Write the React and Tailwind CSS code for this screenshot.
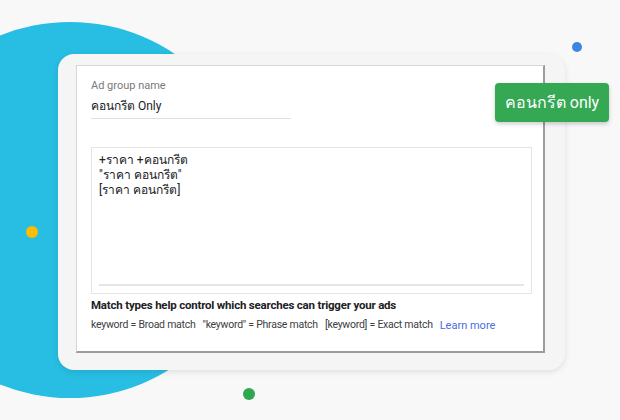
import React from 'react'

const App = () => {
    return (
        <div className="relative w-[620px] h-[420px] overflow-hidden bg-[#f8f8f8]" style={{ fontFamily: 'Roboto, "Noto Sans", sans-serif' }}>
            {/* Decorations */}
            <div className="absolute left-[-118px] top-[22px] w-[376px] h-[376px] rounded-full bg-[#28bde2]"></div>
            <div className="absolute left-[572px] top-[42px] w-[10px] h-[10px] rounded-full bg-[#3d86e0]"></div>
            <div className="absolute left-[26px] top-[226px] w-[12px] h-[12px] rounded-full bg-[#fbbc05]"></div>
            <div className="absolute left-[243px] top-[388px] w-[12px] h-[12px] rounded-full bg-[#2ea84f]"></div>

            {/* Card */}
            <div className="relative ml-[58px] pt-[54px] w-[507px]">
                <div className="bg-[#f5f5f5] rounded-2xl shadow-[0_2px_6px_rgba(0,0,0,0.1)] pt-[11px] pl-[18px] pr-[20px] pb-[17px]">
                    <div className="bg-white h-[288px] border border-[#d6d6d6] border-r-2 border-b-2 border-r-[#9c9c9c] border-b-[#9c9c9c] pl-[14px] pr-[13px] pt-[12px]">
                        {/* Ad group name */}
                        <div className="w-[200px]">
                            <div className="text-[11px] leading-[16px] text-[#7a7a7a]">Ad group name</div>
                            <div className="mt-[4px] text-[12px] leading-[16px] text-[#202124]">คอนกรีต Only</div>
                            <div className="mt-[4px] h-px bg-[#e0e0e0]"></div>
                        </div>

                        {/* Keywords box */}
                        <div className="mt-[28px] w-[441px] h-[147px] border border-[#e4e4e4] px-[7px] pt-[5px] flex flex-col">
                            <div className="text-[12px] leading-[15px] text-[#202124] flex-1">
                                <div>+ราคา +คอนกรีต</div>
                                <div>"ราคา คอนกรีต"</div>
                                <div>[ราคา คอนกรีต]</div>
                            </div>
                            <div className="h-[2px] bg-[#e6e6e6] mb-[7px]"></div>
                        </div>

                        <div className="mt-[3px] text-[11.5px] leading-[16px] font-bold text-[#202124] tracking-[-0.2px]">
                            Match types help control which searches can trigger your ads
                        </div>
                        <div className="mt-[3px] text-[10.5px] leading-[16px] text-[#3c4043] flex items-center whitespace-nowrap tracking-[-0.25px]">
                            <span>keyword = Broad match</span>
                            <span className="ml-[7px]">"keyword" = Phrase match</span>
                            <span className="ml-[7px]">[keyword] = Exact match</span>
                            <span className="ml-[7px] mt-[2px] text-[11px] tracking-normal text-[#4a6ee0]">Learn more</span>
                        </div>
                    </div>
                </div>

                {/* Badge */}
                <div className="absolute left-[437px] top-[83px] w-[114px] h-[39px] rounded-[4px] bg-[#34a853] shadow-[0_2px_4px_rgba(0,0,0,0.2)] flex items-center justify-center text-white text-[16px]">
                    คอนกรีต only
                </div>
            </div>
        </div>
    )
}

export default App
